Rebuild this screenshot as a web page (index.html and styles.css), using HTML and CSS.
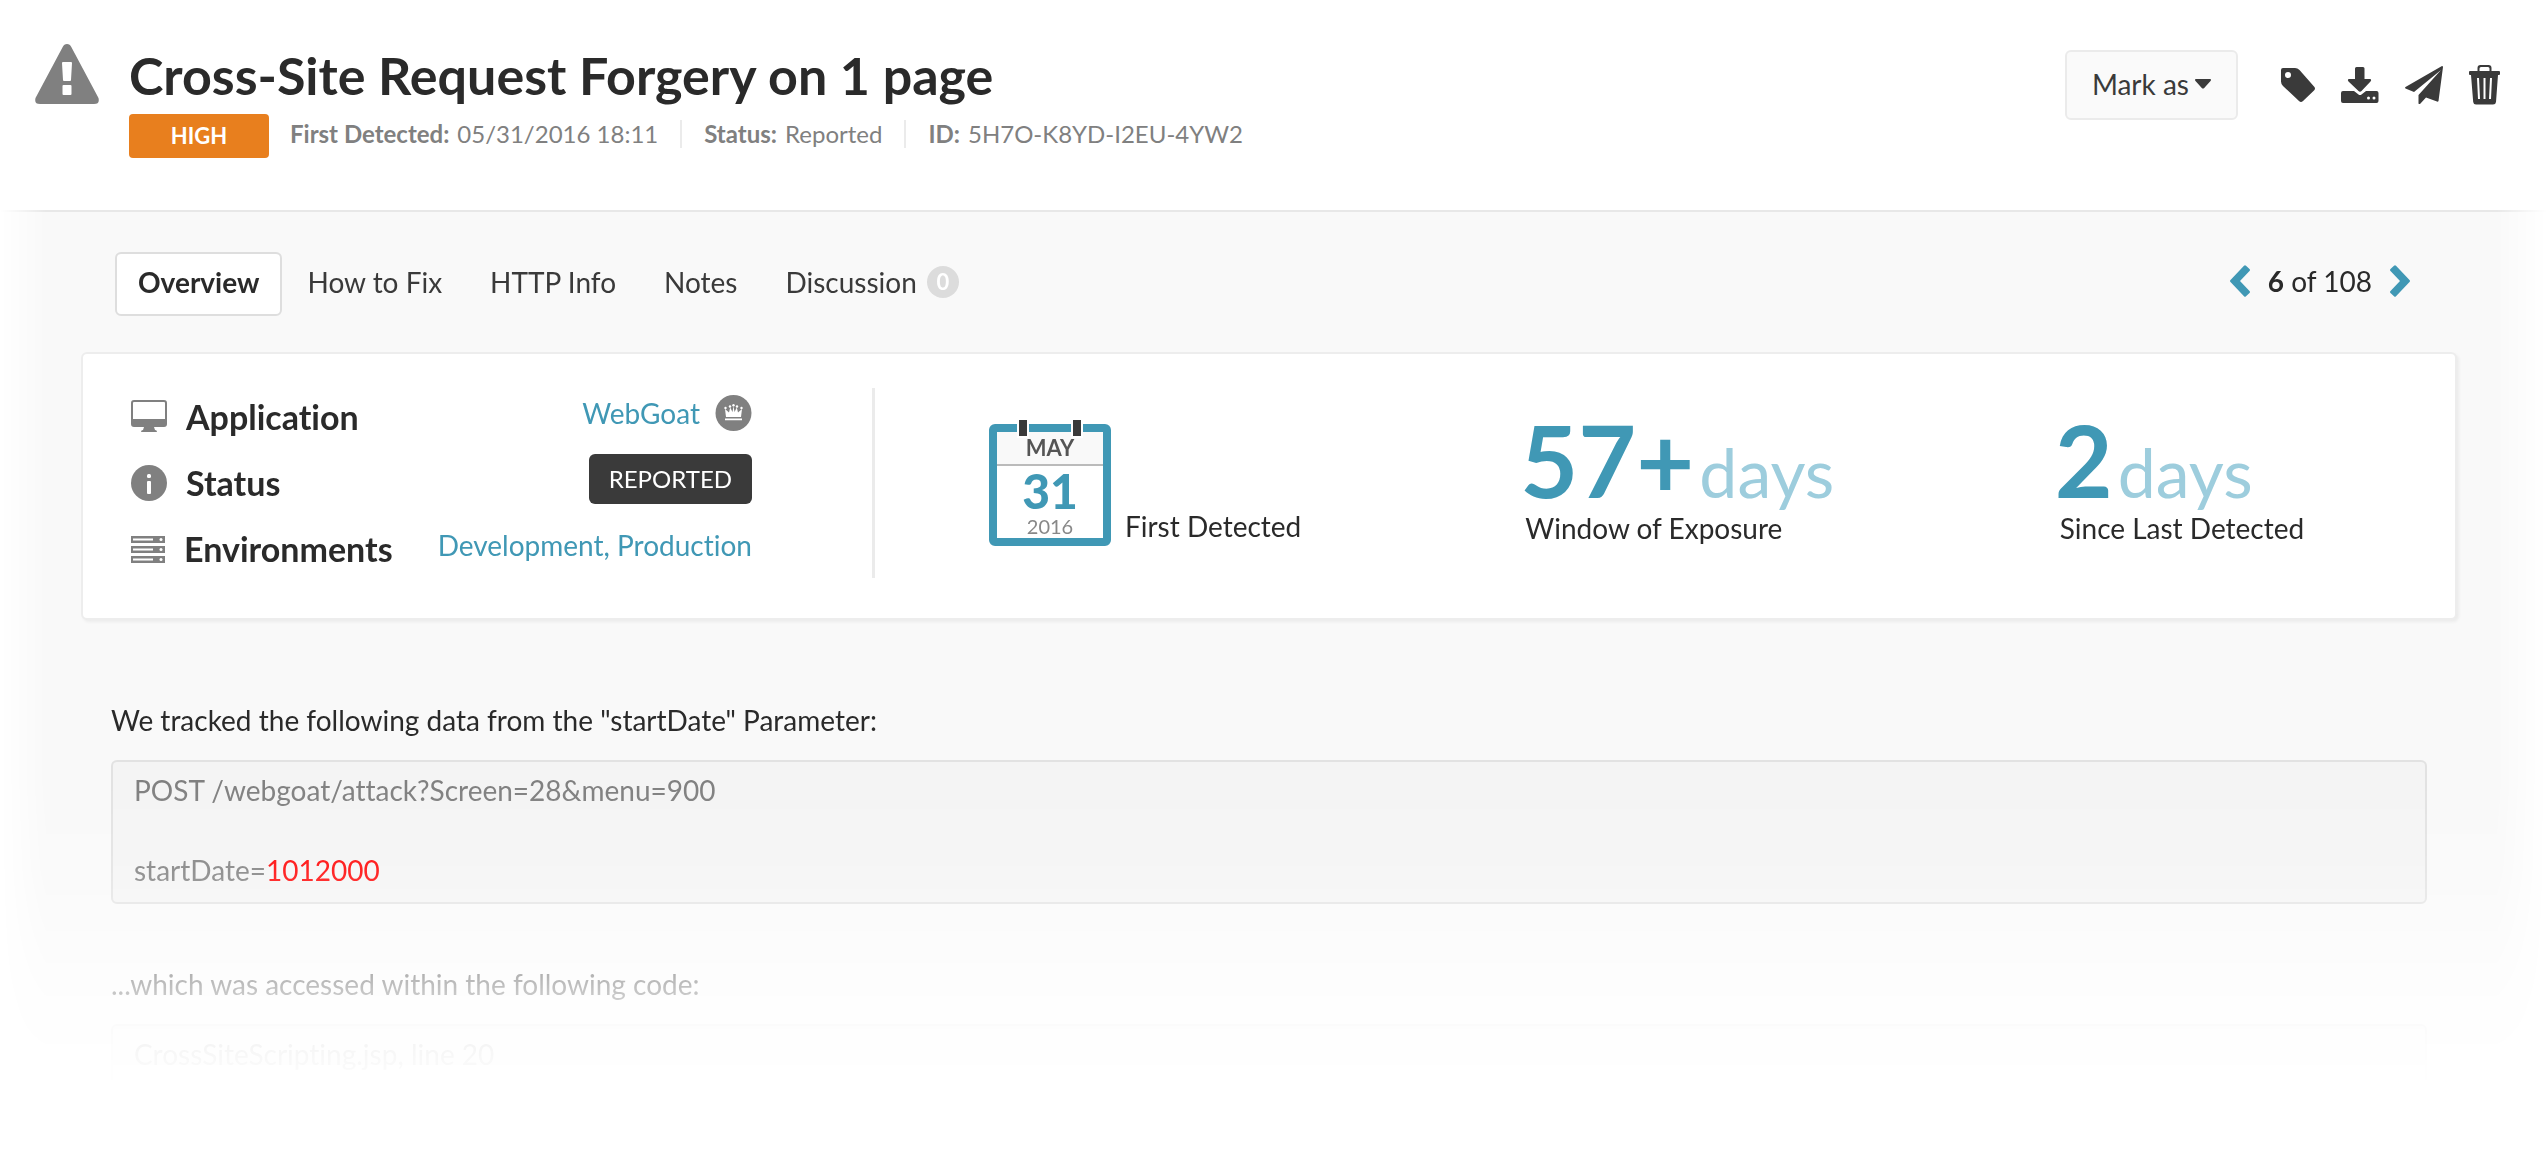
FILE: index.html
```html
<!DOCTYPE html>
<html lang="en">
<head>
<meta charset="utf-8">
<title>Cross-Site Request Forgery on 1 page</title>
<link rel="stylesheet" href="styles.css">
</head>
<body>
<header class="page-header">
  <svg class="warning" viewBox="0 0 64 60" aria-hidden="true"><path fill="#808080" fill-rule="evenodd" d="M32 0q3 0 4.300 3L63.500 54q1.500 6-4.500 6H5q-6 0-4.500-6L27.700 3Q29 0 32 0zM28 18q-1 0-1 1l1 17q0 1 1 1h6q1 0 1-1l1-17q0-1-1-1zM28.500 41q-1 0-1 1v8q0 1 1 1h7q1 0 1-1v-8q0-1-1-1z"/></svg>
  <div class="heading">
    <h1>Cross-Site Request Forgery on 1 page</h1>
    <div class="meta">
      <span class="severity">HIGH</span>
      <span class="fact"><b>First Detected:</b> 05/31/2016 18:11</span>
      <span class="fact"><b>Status:</b> Reported</span>
      <span class="fact"><b>ID:</b> 5H7O-K8YD-I2EU-4YW2</span>
    </div>
  </div>
  <div class="actions">
    <button class="mark" type="button">Mark as<svg class="caret" viewBox="0 0 16 10" aria-hidden="true"><path fill="#3a3a3a" d="M1 0h14q2 .5.500 2L9.200 9q-1.200 1-2.400 0L.5 2Q-1 .5 1 0z"/></svg></button>
    <button class="icon" type="button" aria-label="Tag"><svg width="34" height="34" viewBox="0 0 34 34"><path fill="#3a3a3a" fill-rule="evenodd" d="M2 0h12q2.500 0 4.500 2l14.500 16.500q2 2 0 4L22 33q-2 2-4 0L2 18Q0 16 0 13.500V2Q0 0 2 0zM7 4a3 3 0 1 0 0 6 3 3 0 0 0 0-6z"/></svg></button>
    <button class="icon" type="button" aria-label="Download"><svg width="38" height="36" viewBox="0 0 38 36"><path fill="#3a3a3a" fill-rule="evenodd" d="M15.500 0h6.500q1.500 0 1.500 1.500V12H29q2 .5.500 2.500l-9 9.500q-1.500 1.500-3 0l-10-9.500Q6 12.500 8 12h6V1.500Q14 0 15.500 0zM2 24h11l4.500 3.500q1.500 1 3 0L25 24h10.500q2 0 2 2v8q0 2-2 2H2q-2 0-2-2v-8q0-2 2-2zM27.500 29.500a1.500 1.500 0 1 0 0 3 1.500 1.500 0 0 0 0-3zM33 29.500a1.500 1.500 0 1 0 0 3 1.500 1.500 0 0 0 0-3z"/></svg></button>
    <button class="icon" type="button" aria-label="Send"><svg width="38" height="38" viewBox="0 0 38 38"><path fill="#3a3a3a" d="M37 0q1 0 1 1l-4.500 34q-.5 1-1.500.5L21 31.500 15 38q-1.500.5-1.500-1V29L36 4 9 26 .5 22.500q-1-.700 0-1.500z"/></svg></button>
    <button class="icon" type="button" aria-label="Delete"><svg width="31" height="40" viewBox="0 0 31 40"><path fill="#3a3a3a" fill-rule="evenodd" d="M8.500 6V3q0-3 3-3h8q3 0 3 3v3H30q1 0 1 1v2q0 1-1 1h-1l-2 27q-.3 2.500-3 2.500H7Q4.500 39.500 4.200 37L2 10H1Q0 10 0 9V7q0-1 1-1zm2 0h10V3.500q0-1.500-1.500-1.500h-7q-1.500 0-1.500 1.500zM8 13l1 21h2l-1-21zM14.500 13v21h2V13zM21 13l-1 21h2l1-21z"/></svg></button>
  </div>
</header>
<main class="panel">
  <div class="toolbar">
    <nav class="tabs">
      <a class="tab current" href="#overview">Overview</a>
      <a class="tab" href="#fix">How to Fix</a>
      <a class="tab" href="#http">HTTP Info</a>
      <a class="tab" href="#notes">Notes</a>
      <a class="tab" href="#discussion">Discussion<span class="count">0</span></a>
    </nav>
    <div class="pager">
      <button class="step" type="button" aria-label="Previous"><svg width="20" height="32" viewBox="0 0 20 32"><path fill="#4098b5" d="M.5 15 14 .8q1-1 2 0L19.500 4q1 1 0 2L10 16l9.500 10q1 1 0 2L16 31.200q-1 1-2 0L.5 17q-1-1 0-2z"/></svg></button>
      <span class="position"><b>6</b> of 108</span>
      <button class="step" type="button" aria-label="Next"><svg width="20" height="32" viewBox="0 0 20 32"><path fill="#4098b5" d="M19.500 15 6 .8q-1-1-2 0L.5 4q-1 1 0 2L10 16 .5 26q-1 1 0 2L4 31.200q1 1 2 0L19.500 17q1-1 0-2z"/></svg></button>
    </div>
  </div>
  <section class="summary">
    <dl class="details">
      <div class="row">
        <dt><svg width="36" height="34" viewBox="0 0 36 34"><path fill="#808080" fill-rule="evenodd" d="M3 0h30q3 0 3 3v21q0 3-3 3H23l1 3q2 0 2 2H10q0-2 2-2l1-3H3q-3 0-3-3V3q0-3 3-3zM2 3v16h32V3q0-1-1-1H3Q2 2 2 3z"/></svg>Application</dt>
        <dd><a href="#webgoat">WebGoat</a><svg class="crown" width="37" height="36" viewBox="0 0 37 36"><circle cx="18.500" cy="18" r="18" fill="#808080"/><path fill="#fff" d="M11 22 10 14l4 3.500 1.200-5L17.500 17l1-6 1 6 2.300-4.500 1.200 5L27 14l-1 8zM10 23.500h17v1.800H10z"/><g fill="#fff"><circle cx="10.500" cy="13" r="1.200"/><circle cx="15" cy="11.500" r="1.200"/><circle cx="18.500" cy="10.300" r="1.200"/><circle cx="22" cy="11.500" r="1.200"/><circle cx="26.500" cy="13" r="1.200"/></g></svg></dd>
      </div>
      <div class="row">
        <dt><svg width="36" height="36" viewBox="0 0 36 36"><circle cx="18" cy="18" r="18" fill="#808080"/><rect x="16" y="9" width="4" height="4" rx="1.500" fill="#fff"/><rect x="16" y="16" width="4" height="13" rx="1" fill="#fff"/></svg>Status</dt>
        <dd><span class="state">REPORTED</span></dd>
      </div>
      <div class="row">
        <dt><svg width="34" height="27" viewBox="0 0 34 27"><path fill="#808080" d="M0 0h34v7H0zM0 10h34v7H0zM0 20h34v7H0z"/><path fill="#fff" d="M2 2.500h20v2H2zM2 12.500h20v2H2zM2 22.500h20v2H2z"/><g fill="#fff"><circle cx="30" cy="3.500" r="1.500"/><circle cx="30" cy="13.500" r="1.500"/><circle cx="30" cy="23.500" r="1.500"/></g></svg>Environments</dt>
        <dd><a href="#environments">Development, Production</a></dd>
      </div>
    </dl>
    <div class="metrics">
      <div class="metric detected">
        <div class="calendar"><span class="month">MAY</span><span class="day">31</span><span class="year">2016</span></div>
        <span class="caption">First Detected</span>
      </div>
      <div class="metric">
        <div class="figure"><b>57+</b><span>days</span></div>
        <span class="caption">Window of Exposure</span>
      </div>
      <div class="metric">
        <div class="figure"><b>2</b><span>days</span></div>
        <span class="caption">Since Last Detected</span>
      </div>
    </div>
  </section>
  <section class="trace">
    <p>We tracked the following data from the "startDate" Parameter:</p>
    <pre class="code">POST /webgoat/attack?Screen=28&amp;menu=900

startDate=<span class="tainted">1012000</span></pre>
    <p>...which was accessed within the following code:</p>
    <pre class="code">CrossSiteScripting.jsp, line 20</pre>
  </section>
</main>
</body>
</html>
```

FILE: styles.css
```css
*,
*::before,
*::after { box-sizing: border-box; }

body {
  margin: 0;
  background: #fff;
  color: #2a2a2a;
  font: 28px/40px Lato, sans-serif;
  font-variant-ligatures: none;
}

h1, p, pre, dl, dd { margin: 0; }
svg { display: block; flex: none; }
a { color: #4098b5; text-decoration: none; }

button {
  padding: 0;
  border: 0;
  background: none;
  color: #3a3a3a;
  font: inherit;
  cursor: pointer;
}

/* Header */
.page-header {
  display: flex;
  align-items: flex-start;
  padding: 44px 47px 52px 35px;
}

.warning { width: 64px; height: 60px; }
.heading { flex: 1; margin-left: 30px; }
h1 { font-size: 52px; line-height: 62px; }

.meta {
  display: flex;
  align-items: flex-start;
  margin-top: 8px;
  color: #808080;
  font-size: 24px;
}

.severity {
  width: 140px;
  margin-right: 21px;
  border-radius: 4px;
  background: #e87f1e;
  color: #fff;
  font-size: 22px;
  font-weight: 700;
  line-height: 44px;
  text-align: center;
}

.fact {
  display: flex;
  align-items: center;
  gap: 8px;
}

.fact + .fact::before {
  width: 2px;
  height: 28px;
  margin: 0 14px 0 22px;
  background: #ebebeb;
  content: "";
}

.actions {
  display: flex;
  align-items: center;
  padding-top: 6px;
}

.mark {
  display: flex;
  align-items: center;
  gap: 6px;
  height: 70px;
  margin-right: 43px;
  padding: 0 25px 2px;
  border: 2px solid #ebebeb;
  border-radius: 6px;
  background: #fafafa;
}

.caret { width: 16px; height: 10px; }
.icon + .icon { margin-left: 26px; }

/* Panel, fading out at the sides and the foot */
.panel {
  padding: 40px 90px 64px 81px;
  border-top: 2px solid #e8e8e8;
  background: #f9f9f9;
  mask-image:
    linear-gradient(to right, transparent, #000 46px, #000 calc(100% - 50px), transparent),
    linear-gradient(to bottom, #000 570px, rgba(0, 0, 0, .86) 660px, rgba(0, 0, 0, .65) 708px, rgba(0, 0, 0, .34) 768px, rgba(0, 0, 0, .24) 788px, rgba(0, 0, 0, .08) 836px, transparent 880px);
  mask-composite: intersect;
}

.toolbar {
  display: flex;
  justify-content: space-between;
  padding: 0 47px 36px 34px;
}

.tabs { display: flex; gap: 2px; }

.tab {
  display: flex;
  align-items: center;
  height: 64px;
  padding: 0 21px 4px;
  border: 2px solid transparent;
  border-radius: 6px;
  color: #3a3a3a;
}

.tab.current {
  border-color: #dedede;
  background: #fff;
  color: #2a2a2a;
  font-weight: 700;
}

.count {
  width: 32px;
  margin-left: 10px;
  border-radius: 16px;
  background: #dcdcdc;
  color: #fff;
  font-size: 22px;
  font-weight: 700;
  line-height: 32px;
  text-align: center;
}

.pager {
  display: flex;
  align-items: center;
  gap: 18px;
  height: 58px;
}

/* Summary card */
.summary {
  display: flex;
  align-items: flex-start;
  padding: 30px 0 36px 48px;
  border: 2px solid #ededed;
  border-radius: 6px;
  background: #fff;
  box-shadow: 2px 2px 3px #ececec;
}

.details {
  width: 741px;
  padding-right: 120px;
}

.row {
  display: flex;
  justify-content: space-between;
  height: 66px;
}

dt, dd { display: flex; align-items: center; }
dt { gap: 19px; font-size: 34px; font-weight: 700; }
dd { padding-bottom: 8px; }
.crown { margin-left: 15px; }

.state {
  padding: 0 20px;
  border-radius: 6px;
  background: #3a3a3a;
  color: #fff;
  font-size: 24px;
  line-height: 50px;
}

.metrics {
  display: grid;
  flex: 1;
  grid-template-columns: 536fr 534fr 395fr;
  margin-top: 4px;
  min-height: 190px;
  padding: 26px 0 0 114px;
  border-left: 3px solid #ebebeb;
}

.detected {
  display: flex;
  align-items: flex-end;
  gap: 14px;
  height: 132px;
}

.calendar {
  position: relative;
  display: flex;
  flex-direction: column;
  width: 122px;
  height: 122px;
  border: 8px solid #4098b5;
  border-radius: 6px;
  text-align: center;
}

.calendar::before,
.calendar::after {
  position: absolute;
  top: -14px;
  width: 12px;
  height: 20px;
  border: 2px solid #fff;
  background: #3a3a3a;
  content: "";
}

.calendar::before { left: 20px; }
.calendar::after { right: 20px; }

.month {
  height: 34px;
  border-bottom: 2px solid #bbb;
  background: #f9f9f9;
  color: #555;
  font-size: 22px;
  font-weight: 700;
  line-height: 32px;
}

.day {
  color: #4098b5;
  font-size: 48px;
  font-weight: 900;
  line-height: 50px;
}

.year {
  color: #888;
  font-size: 20px;
  line-height: 20px;
}

.caption { display: block; }

.figure {
  display: flex;
  align-items: baseline;
  gap: 5px;
  height: 94px;
  margin-left: -5px;
  color: #4098b5;
  font-size: 100px;
  line-height: 90px;
}

.figure span { color: #9dcddd; font-size: 68px; }

/* Trace */
.trace { padding: 80px 30px 0; }
.trace p { margin-bottom: 20px; }

.code {
  margin-bottom: 60px;
  padding: 8px 21px 12px;
  border: 2px solid #e2e2e2;
  border-radius: 6px;
  background: #f4f4f4;
  color: #808080;
  font-family: inherit;
}

.code:last-child { margin-bottom: 0; }
.tainted { color: #f00; }
```
